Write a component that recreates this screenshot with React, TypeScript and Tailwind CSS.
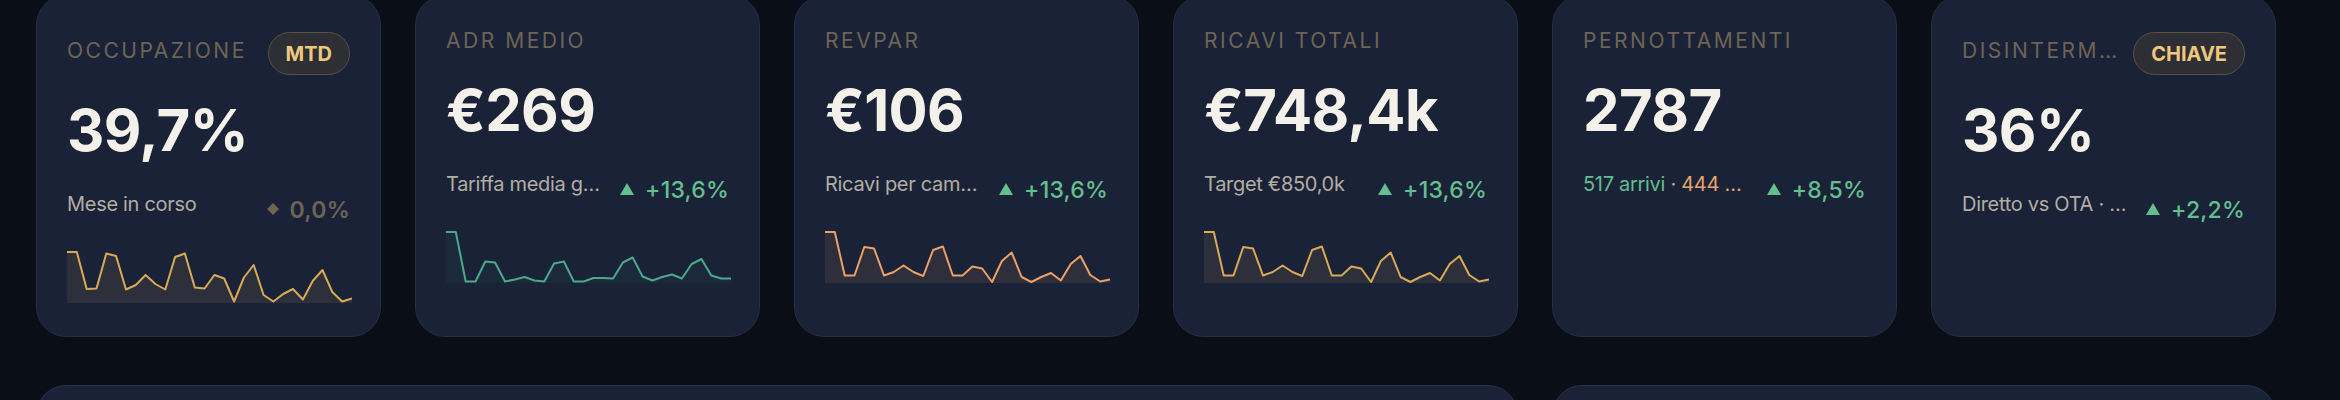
import React from "react";

type Kpi = {
  label: string;
  badge?: string;
  value: string;
  sub: React.ReactNode;
  subClass?: string;
  delta: string;
  trend: "up" | "flat";
  spark?: { data: number[]; color: string; fill: number };
};

const occ = [1, 1, 0.26, 0.27, 0.97, 0.92, 0.25, 0.34, 0.54, 0.36, 0.25, 0.9, 0.97, 0.29, 0.27, 0.54, 0.47, 0.01, 0.49, 0.74, 0.14, 0.01, 0.16, 0.26, 0.05, 0.42, 0.64, 0.2, 0.01, 0.07];
const adr = [1, 1, 0.01, 0.01, 0.41, 0.39, 0.01, 0.05, 0.1, 0.03, 0.01, 0.37, 0.41, 0.01, 0.01, 0.08, 0.08, 0.07, 0.39, 0.49, 0.11, 0.03, 0.1, 0.15, 0.07, 0.36, 0.46, 0.13, 0.07, 0.07];
const rev = [1, 1, 0.13, 0.13, 0.7, 0.67, 0.13, 0.2, 0.33, 0.2, 0.12, 0.64, 0.71, 0.13, 0.13, 0.31, 0.27, 0, 0.42, 0.59, 0.1, 0, 0.1, 0.18, 0.03, 0.36, 0.52, 0.14, 0.01, 0.05];

const kpis: Kpi[] = [
  {
    label: "Occupazione",
    badge: "MTD",
    value: "39,7%",
    sub: "Mese in corso",
    delta: "0,0%",
    trend: "flat",
    spark: { data: occ, color: "#d8aa55", fill: 0.1 },
  },
  {
    label: "ADR medio",
    value: "€269",
    sub: "Tariffa media giornaliera",
    delta: "+13,6%",
    trend: "up",
    spark: { data: adr, color: "#4aa98a", fill: 0.05 },
  },
  {
    label: "RevPAR",
    value: "€106",
    sub: "Ricavi per camera disponibile",
    delta: "+13,6%",
    trend: "up",
    spark: { data: rev, color: "#eba066", fill: 0.1 },
  },
  {
    label: "Ricavi totali",
    value: "€748,4k",
    sub: "Target €850,0k",
    delta: "+13,6%",
    trend: "up",
    spark: { data: rev, color: "#d8aa55", fill: 0.1 },
  },
  {
    label: "Pernottamenti",
    value: "2787",
    sub: (
      <>
        <span className="text-[#62bd8c]">517 arrivi</span>
        <span className="text-[#b3ada4]"> · </span>
        <span>444 partenze</span>
      </>
    ),
    subClass: "text-[#e8a56b]",
    delta: "+8,5%",
    trend: "up",
  },
  {
    label: "Disintermediazione",
    badge: "CHIAVE",
    value: "36%",
    sub: "Diretto vs OTA · quota diretta",
    delta: "+2,2%",
    trend: "up",
  },
];

function Sparkline({ data, color, fill }: { data: number[]; color: string; fill: number }) {
  const w = 285;
  const h = 52;
  const step = w / (data.length - 1);
  const pts = data.map((v, i) => [i * step, 1 + (1 - v) * 50] as const);
  const line = pts.map(([x, y]) => `${x.toFixed(1)},${y.toFixed(1)}`).join(" ");
  const area = `0,${h} ${line} ${w},${h}`;
  return (
    <svg width={w} height={h} viewBox={`0 0 ${w} ${h}`} className="mt-[27px] block">
      <polygon points={area} fill={color} fillOpacity={fill} />
      <polyline points={line} fill="none" stroke={color} strokeWidth={2} strokeLinejoin="round" strokeLinecap="butt" />
    </svg>
  );
}

function KpiCard({ k }: { k: Kpi }) {
  return (
    <div className="flex min-w-0 flex-col rounded-[30px] border border-[#262e45] bg-[#1a2237] px-[30px] pt-[33px] pb-[33px]">
      <div className={`flex items-center justify-between gap-[12px] ${k.badge ? "h-[43px]" : "h-[23px]"}`}>
        <div className="min-w-0 truncate text-[21px] leading-[23px] tracking-[0.12em] text-[#6e6455] uppercase">
          {k.label}
        </div>
        {k.badge && (
          <div className="flex h-[43px] shrink-0 translate-y-[3px] items-center rounded-full border-[1.5px] border-[#5a5143] bg-[#2e2e35] px-[17px] text-[20px] font-bold text-[#ecc97c]">
            {k.badge}
          </div>
        )}
      </div>
      <div className="mt-[29px] text-[58px] leading-[58px] font-bold tracking-[-0.01em] text-[#f4f1ea]">
        {k.value}
      </div>
      <div className="mt-[31px] flex items-start gap-[18px]">
        <div
          className={`min-w-0 flex-1 truncate text-[20px] leading-[28px] tracking-[-0.015em] ${k.subClass ?? "text-[#b3ada4]"}`}
        >
          {k.sub}
        </div>
        <div
          className={`mt-[6px] flex shrink-0 items-center gap-[11px] text-[23px] leading-[28px] font-medium tracking-[0.01em] ${
            k.trend === "up" ? "text-[#62bf8e]" : "text-[#6e6455]"
          }`}
        >
          {k.trend === "up" ? (
            <svg width="14" height="12" viewBox="0 0 14 12" className="-mt-[2px]">
              <polygon points="7,0 14,12 0,12" fill="#62bf8e" />
            </svg>
          ) : (
            <svg width="12" height="12" viewBox="0 0 12 12" className="-mt-[2px]">
              <polygon points="6,0 12,6 6,12 0,6" fill="#6e6455" />
            </svg>
          )}
          <span className={k.trend === "up" ? "" : "font-semibold"}>{k.delta}</span>
        </div>
      </div>
      {k.spark && <Sparkline {...k.spark} />}
    </div>
  );
}

export default function App() {
  return (
    <div
      className="h-[400px] w-[2340px] overflow-hidden bg-[#0a0e17]"
      style={{ fontFamily: "Inter, 'Noto Sans', sans-serif" }}
    >
      <div className="-mt-[5px] ml-[36px] w-[2240px]">
        <div className="grid grid-cols-6 gap-[34px]">
          {kpis.map((k) => (
            <KpiCard key={k.label} k={k} />
          ))}
        </div>
        <div className="mt-[48px] grid grid-cols-6 gap-[34px]">
          <div className="col-span-4 h-[240px] rounded-[30px] border border-[#29324b] bg-[#1a2237]" />
          <div className="col-span-2 h-[240px] rounded-[30px] border border-[#29324b] bg-[#1a2237]" />
        </div>
      </div>
    </div>
  );
}
